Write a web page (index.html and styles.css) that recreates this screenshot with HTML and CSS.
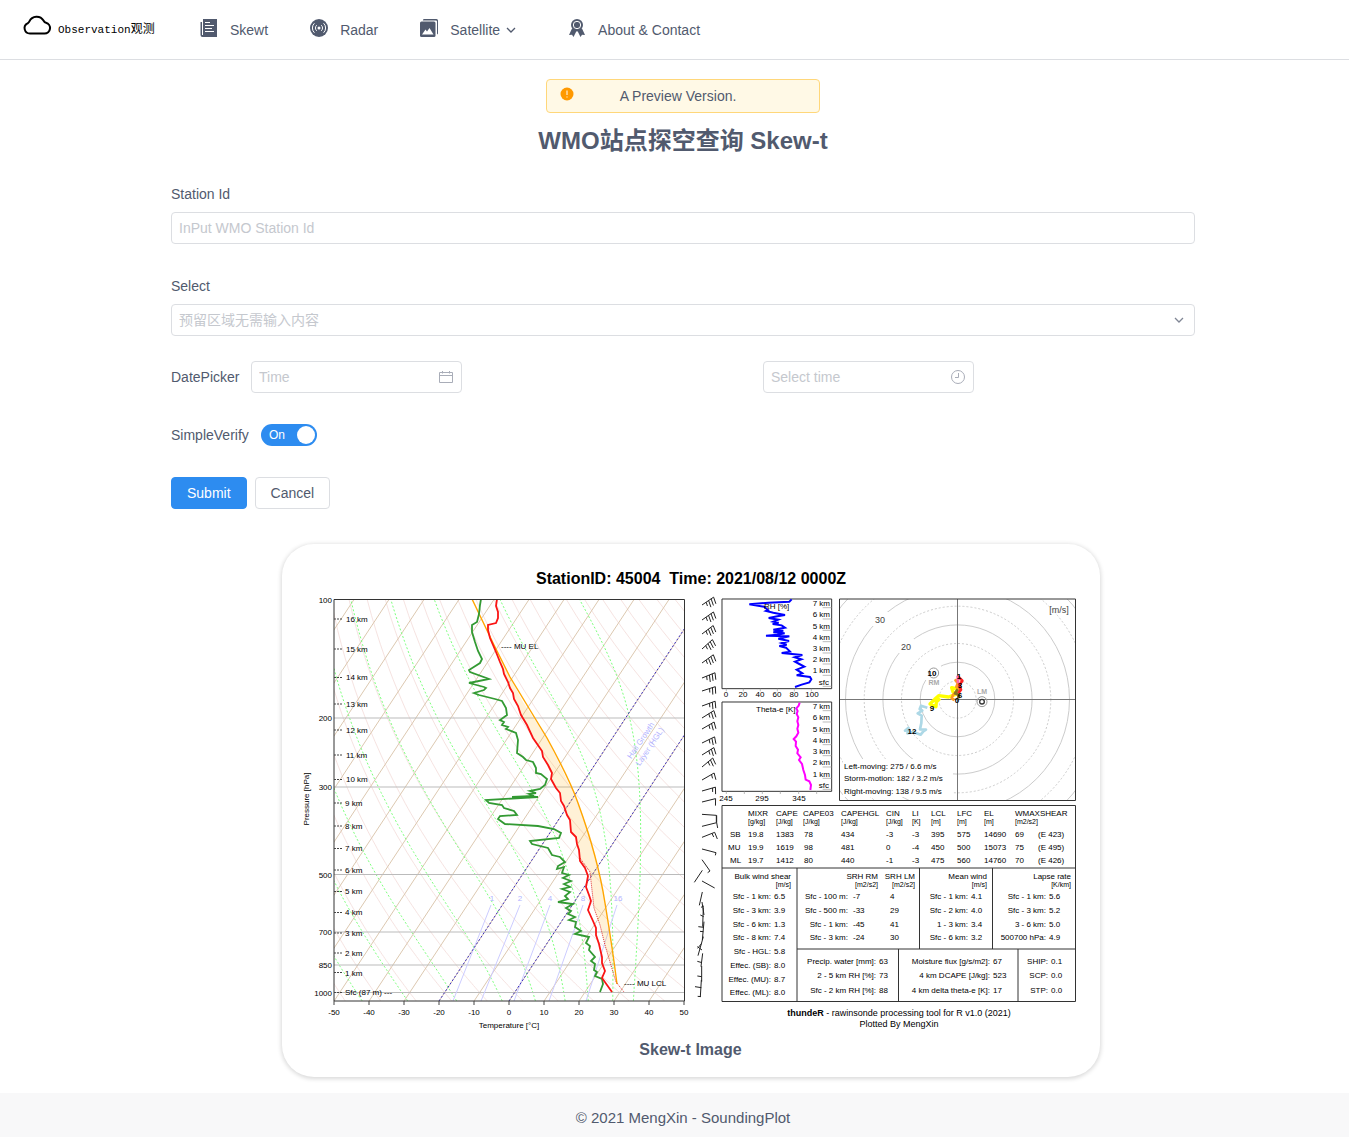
FILE: index.html
```html
<!DOCTYPE html>
<html lang="en">
<head>
<meta charset="utf-8">
<meta name="viewport" content="width=device-width, initial-scale=1">
<title>WMO站点探空查询 Skew-t</title>
<link rel="stylesheet" href="styles.css">
</head>
<body>
<header class="header">
  <a class="brand" href="#">
    <svg class="brand-icon" viewBox="0 0 30 22" aria-hidden="true"><path d="M8 19.500H22.500A5.500 5.500 0 0 0 24 8.700C22.500 8.500 22.300 8 21.500 6.500A8 8 0 0 0 7.400 7.300C7 8.600 6.500 8.700 5.500 9.300A5.400 5.400 0 0 0 8 19.500Z"/></svg>
    <span class="brand-name">Observation<span class="brand-cjk">观测</span></span>
  </a>
  <nav class="nav">
    <a class="nav-item" href="#"><svg class="nav-icon" viewBox="0 0 18 18" aria-hidden="true"><path class="solid" d="M3 0H17V18H2.500A2 2 0 0 1 .5 16V3H2V16H3Z"/><path class="cut" d="M5 3.500H10M5 6.500H14M5 9.500H12M5 12.500H14"/></svg>Skewt</a>
    <a class="nav-item" href="#"><svg class="nav-icon" viewBox="0 0 18 18" aria-hidden="true"><circle class="solid" cx="9" cy="9" r="9"/><circle class="dot" cx="9" cy="9" r="1.500"/><path class="cut" d="M6.700 6.200A3.800 3.800 0 0 0 6.700 11.800M11.300 6.200A3.800 3.800 0 0 1 11.300 11.800M4.400 4.300A6.500 6.500 0 0 0 4.400 13.700M13.600 4.300A6.500 6.500 0 0 1 13.600 13.700"/></svg>Radar</a>
    <a class="nav-item nav-sub" href="#"><svg class="nav-icon" viewBox="0 0 18 18" aria-hidden="true"><path class="solid" d="M4 0H16.500A1.500 1.500 0 0 1 18 1.500V14A1.500 1.500 0 0 1 17 15.500V2.500A1 1 0 0 0 16 1.500H2.800A1.500 1.500 0 0 1 4 0Z"/><rect class="solid" y="2.500" width="15.500" height="15.500" rx="1.500"/><path class="dot" d="M2 15.500L5.500 10.500L7 12.500L9.500 9L13.500 15.500Z"/></svg>Satellite<svg class="chevron" viewBox="0 0 10 10" aria-hidden="true"><path d="M1 3L5 7L9 3"/></svg></a>
    <a class="nav-item" href="#"><svg class="nav-icon" viewBox="0 0 18 18" aria-hidden="true"><path class="solid" d="M4 9.500L1 16L4 15.700L5.500 18L8 13H10L12.500 18L14 15.700L17 16L14 9.500Z"/><path class="cut" d="M9 12V18"/><circle class="solid" cx="9" cy="6" r="6"/><circle class="cut" cx="9" cy="6" r="3.700"/></svg>About &amp; Contact</a>
  </nav>
</header>

<main class="main">
  <div class="alert" role="alert"><svg class="alert-icon" viewBox="0 0 14 14" aria-hidden="true"><circle cx="7" cy="7" r="6.500"/><path d="M7 3.500V8M7 9.500V10.500"/></svg>A Preview Version.</div>
  <h1 class="title">WMO站点探空查询 Skew-t</h1>

  <form class="form">
    <div class="field">
      <label for="station">Station Id</label>
      <input class="control" id="station" type="text" placeholder="InPut WMO Station Id">
    </div>
    <div class="field field-last">
      <label for="region">Select</label>
      <div class="control-wrap">
        <select class="control" id="region"><option>预留区域无需输入内容</option></select>
        <svg class="chevron control-icon" viewBox="0 0 10 10" aria-hidden="true"><path d="M1 3L5 7L9 3"/></svg>
      </div>
    </div>
    <div class="dates">
      <div class="date-cell">
        <label class="date-label" for="date">DatePicker</label>
        <div class="control-wrap picker">
          <input class="control" id="date" type="text" placeholder="Time">
          <svg class="picker-icon control-icon" viewBox="0 0 14 14" aria-hidden="true"><path d="M.5 2.500H13.500V12.500H.5ZM.5 5.500H13.500M3.500 1V3.500M10.500 1V3.500"/></svg>
        </div>
      </div>
      <div class="date-cell">
        <span class="date-label"></span>
        <div class="control-wrap picker">
          <input class="control" type="text" placeholder="Select time" aria-label="Select time">
          <svg class="picker-icon control-icon" viewBox="0 0 14 14" aria-hidden="true"><circle cx="7" cy="7" r="6.500"/><path d="M7.500 3V7.500H4"/></svg>
        </div>
      </div>
    </div>
    <div class="verify">
      <label class="verify-label" for="verify">SimpleVerify</label>
      <label class="switch"><input id="verify" type="checkbox" role="switch" checked><span>On</span></label>
    </div>
    <div class="actions">
      <button class="btn btn-primary" type="submit">Submit</button>
      <button class="btn" type="reset">Cancel</button>
    </div>
  </form>

  <figure class="card">
    <svg class="plot" viewBox="282 544 818 494" role="img" aria-label="Skew-t sounding plot">
      <defs>
        <clipPath id="skew-clip"><rect x="334" y="599" width="350" height="402"/></clipPath>
        <clipPath id="hodo-clip"><rect x="840" y="599" width="236" height="201"/></clipPath>
      </defs>
      <text class="plot-title" x="691" y="584" text-anchor="middle">StationID: 45004&#160; Time: 2021/08/12 0000Z</text>

      <g clip-path="url(#skew-clip)">
        <g id="dry" class="dry"></g>
        <g id="isotherms" class="isotherm"></g>
        <g id="moist" class="moist"></g>
        <path class="isobar" d="M334 718H684M334 787H684M334 874.500H684M334 932H684M334 965H684M334 992.500H684"/>
        <path class="mixing" d="M453 1001L491 905M481 1001L520 905M514 1001L550 905M549 1001L583 905M586 1001L617 905"/>
        <path class="hgl" d="M439 1001L704 599M509 1001L774 599"/>
        <path class="cape" d="M494 647L503 672L513 695L523 718L542 752L551 772L552 780L560 795L570 820L572 832L577 842L580 860L590 872L592 890L594 908L600 925L605 945L610 962L613 966L610 933L605 903L598 867L590 835L578 803L567 780L547 738L523 702Z"/>
        <path class="parcel" d="M472 599L494 645L510 677L530 710L547 738Q570 780 578 803Q598 858 605 903Q612 945 617 984"/>
        <path class="virtual" d="M580 858L590 872L592 890L594 908L600 925L605 945L610 962L616 982L624 992"/>
        <path class="dewpoint" d="M481 599L480 605L479 614L477 622L472 625L472 632L475 642L478 651L482 659L480 663L469 670L470 672L489 679L469 683L484 687L486 688L484 690L474 693L479 695L495 699L502 701L506 708L507 715L500 720L504 722L502 725L508 727L506 729L516 733L518 740L517 753L523 757L526 760L533 762L536 768L536 773L541 774L547 779L545 785L540 789L530 791L536 793L529 794L534 796L512 797L538 797L486 800L489 803L502 805L504 808L514 811L517 815L500 816L498 819L505 824L538 826L554 829L561 833L559 838L530 841L532 844L548 848L552 855L560 857L565 862L558 866L557 869L564 867L562 873L569 875L563 878L571 881L564 884L570 887L562 889L570 892L565 896L568 899L558 902L573 904L566 908L571 911L568 914L575 917L569 920L576 922L575 927L581 931L575 934L589 937L586 943L590 946L589 950L595 957L591 961L595 964L594 970L597 972L595 976L602 979L603 984L600 992"/>
        <path class="temperature" d="M497 599L496 606L498 612L498 618L496 623L488 625L488 630L490 638L493 645L496 652L500 662L503 669L504 674L508 682L510 688L513 693L514 699L518 706L521 715L527 725L533 738L542 751L543 757L548 765L552 773L551 779L556 788L560 793L561 801L564 806L567 815L570 820L571 832L576 837L577 844L579 850L580 861L585 868L588 876L586 887L589 895L591 901L588 910L593 921L596 928L596 935L599 944L602 957L602 963L605 971L602 978L612 992"/>
      </g>
      <path class="frame" d="M334 599.500H684.500V1001H334Z"/>
      <path class="tick" d="M334 619H343M334 649H343M334 677.500H343M334 704H343M334 730H343M334 755H343M334 779.500H343M334 803H343M334 826H343M334 848.500H343M334 870H343M334 891.500H343M334 912.500H343M334 933H343M334 953H343M334 972.500H343M334 992.500H343"/>
      <path class="tick tick-solid" d="M334 1001V1005M369 1001V1005M404 1001V1005M439 1001V1005M474 1001V1005M509 1001V1005M544 1001V1005M579 1001V1005M614 1001V1005M649 1001V1005M684 1001V1005"/>
      <g class="small">
        <text x="346" y="622">16 km</text><text x="346" y="652">15 km</text><text x="346" y="680">14 km</text><text x="346" y="707">13 km</text><text x="346" y="733">12 km</text><text x="346" y="758">11 km</text><text x="346" y="782">10 km</text><text x="345" y="806">9 km</text><text x="345" y="829">8 km</text><text x="345" y="851">7 km</text><text x="345" y="873">6 km</text><text x="345" y="894">5 km</text><text x="345" y="915">4 km</text><text x="345" y="936">3 km</text><text x="345" y="956">2 km</text><text x="345" y="976">1 km</text><text x="345" y="995">Sfc (87 m) ---</text>
        <text x="501" y="649">---- MU EL</text><text x="624" y="986">---- MU LCL</text>
      </g>
      <g class="small" text-anchor="end">
        <text x="332" y="603">100</text><text x="332" y="721">200</text><text x="332" y="790">300</text><text x="332" y="878">500</text><text x="332" y="935">700</text><text x="332" y="968">850</text><text x="332" y="996">1000</text>
      </g>
      <g class="small" text-anchor="middle">
        <text x="334" y="1015">-50</text><text x="369" y="1015">-40</text><text x="404" y="1015">-30</text><text x="439" y="1015">-20</text><text x="474" y="1015">-10</text><text x="509" y="1015">0</text><text x="544" y="1015">10</text><text x="579" y="1015">20</text><text x="614" y="1015">30</text><text x="649" y="1015">40</text><text x="684" y="1015">50</text>
        <text x="509" y="1028">Temperature [°C]</text>
        <text transform="translate(309 799) rotate(-90)">Pressure [hPa]</text>
      </g>
      <g class="small lilac" text-anchor="middle">
        <text x="492" y="901">1</text><text x="520" y="901">2</text><text x="550" y="901">4</text><text x="583" y="901">8</text><text x="618" y="901">16</text>
        <text transform="translate(643 742) rotate(-56)">Hail Growth</text><text transform="translate(652 748) rotate(-56)">Layer (HGL)</text>
      </g>

      <g id="barbs" class="barb"></g>
      <!-- low-level barbs, plotted at a third of the drawing units -->
      <g class="barb barb-low" transform="translate(690 800) scale(.33333)">
        <path d="M36 43L79 46V67M36 79L80 68L83 84M80 68V46M36 112L74 97L82 117M66 100L71 111M36 147L78 158L76 166M36 179L60 213L53 218M37 211L13 247M36 243L74 264M37 276L28 316M36 306L42 345M42 318L33 322M40 322L38 380M41 350L31 345M42 365L37 420M41 382L25 380M40 395L30 394M40 410L24 467M35 430L23 445M36 450L22 440M38 460L33 500M36 488L22 484M35 498V545M35 530L22 528M34 540L31 590M34 563L15 560M33 590L23 589"/>
      </g>

      <g transform="translate(690 590) scale(.33333)">
        <path class="frame panel" d="M96 27H425V296H96ZM96 336H425V604H96Z"/>
        <path class="km-tick" d="M398 53H425M398 87H425M398 121H425M398 155H425M398 189H425M398 222H425M398 256H425M398 289H425M398 362H425M398 396H425M398 430H425M398 464H425M398 497H425M398 531H425M398 565H425M398 598H425"/>
        <path class="km-tick" d="M109 296V304M160 296V304M211 296V304M262 296V304M313 296V304M364 296V304M109 604V612M163 604V612M217 604V612M271 604V612M326 604V612M380 604V612"/>
        <path class="rh" d="M305 28L298 35L235 38L178 43L222 50L234 60L228 63L250 68L285 75L262 79L236 84L265 89L250 95L266 98L248 102L275 106L285 113L250 119L280 122L250 127L284 130L262 134L228 137L298 139L265 146L297 153L275 159L290 164L268 168L288 173L300 185L275 189L337 195L314 202L334 208L315 215L328 222L343 230L320 239L337 250L320 256L360 261L364 268L358 277L335 284L315 291"/>
        <path class="theta" d="M329 338L326 347L319 355L323 363L320 372L325 382L322 394L325 405L322 416L325 428L319 439L311 447L318 455L317 468L324 479L322 490L332 502L327 510L336 522L340 540L345 555L347 569L358 574L363 585L361 600"/>
      </g>
      <g class="small">
        <text x="764" y="609">RH [%]</text><text x="756" y="712">Theta-e [K]</text>
      </g>
      <g class="small" text-anchor="end">
        <text x="830" y="606">7 km</text><text x="830" y="617">6 km</text><text x="830" y="629">5 km</text><text x="830" y="640">4 km</text><text x="830" y="651">3 km</text><text x="830" y="662">2 km</text><text x="830" y="673">1 km</text><text x="829" y="685">sfc</text>
        <text x="830" y="709">7 km</text><text x="830" y="720">6 km</text><text x="830" y="732">5 km</text><text x="830" y="743">4 km</text><text x="830" y="754">3 km</text><text x="830" y="765">2 km</text><text x="830" y="777">1 km</text><text x="829" y="788">sfc</text>
      </g>
      <g class="small" text-anchor="middle">
        <text x="726" y="697">0</text><text x="743" y="697">20</text><text x="760" y="697">40</text><text x="777" y="697">60</text><text x="794" y="697">80</text><text x="812" y="697">100</text>
        <text x="726" y="801">245</text><text x="762" y="801">295</text><text x="799" y="801">345</text>
      </g>

      <g clip-path="url(#hodo-clip)">
        <g class="ring"><circle cx="957.500" cy="699.500" r="37.300"/><circle cx="957.500" cy="699.500" r="74.600"/><circle cx="957.500" cy="699.500" r="112"/><circle cx="957.500" cy="699.500" r="149"/></g>
        <g class="ring ring-dotted"><circle cx="957.500" cy="699.500" r="18.600"/><circle cx="957.500" cy="699.500" r="56"/><circle cx="957.500" cy="699.500" r="93.300"/><circle cx="957.500" cy="699.500" r="130.600"/></g>
        <path class="axis" d="M840 699.500H1076M957.500 599V800"/>
        <path class="mask" d="M872 612H888V626H872ZM897 639H914V653H897ZM924 666H941V680H924ZM843 759H953V797H843Z"/>
      </g>
      <g class="hodo" transform="translate(830 590) scale(.33333)">
        <path class="h-blue" d="M292 353L273 347L269 357L277 362L263 370L275 377L274 399L270 418L288 419L280 424L272 434L250 426L232 430L236 419L225 422L238 411"/>
        <path class="h-yellow" d="M383 297L365 293L369 306L377 313L356 321L326 317L314 328L300 342L318 350L319 336L330 325"/>
        <path class="h-orange" d="M375 268L383 280L379 291L388 297L369 315L365 325L373 330"/>
        <path class="h-red" d="M384 259L397 272L388 286L393 299L385 310"/>
        <path class="h-olive" d="M383 298L375 310L387 315L384 325"/>
        <path class="h-pink" d="M383 257L384 280"/>
        <circle class="mover" cx="311" cy="249" r="15"/><circle class="mover" cx="456" cy="335" r="15"/>
        <circle class="mover-in" cx="456" cy="335" r="7"/>
      </g>
      <path class="frame" d="M839.500 599H1075.500V800.500H839.500Z"/>
      <g class="medium" text-anchor="middle">
        <text x="880" y="623">30</text><text x="906" y="650">20</text><text x="1059" y="613">[m/s]</text>
      </g>
      <g class="small bold" text-anchor="middle">
        <text x="932" y="676">10</text><text x="959" y="679">1</text><text x="960" y="688">3</text><text x="960" y="698">6</text><text x="957" y="703">0</text><text x="932" y="711">9</text><text x="912" y="734">12</text>
      </g>
      <g class="tiny bold gray" text-anchor="middle"><text x="934" y="685">RM</text><text x="982" y="694">LM</text></g>
      <g class="small">
        <text x="844" y="769">Left-moving: 275 / 6.6 m/s</text><text x="844" y="781">Storm-motion: 182 / 3.2 m/s</text><text x="844" y="794">Right-moving: 138 / 9.5 m/s</text>
      </g>

      <path class="frame" d="M722 805.500H1075.500V1001.500H722ZM722 868H1075.500M797 868V1001.500M919.500 868V949M992.500 868V949M797 949H1075.500M898.500 949V1001.500M1018 949V1001.500"/>
      <g class="small">
        <text x="748" y="816">MIXR</text><text x="776" y="816">CAPE</text><text x="803" y="816">CAPE03</text><text x="841" y="816">CAPEHGL</text><text x="886" y="816">CIN</text><text x="912" y="816">LI</text><text x="931" y="816">LCL</text><text x="957" y="816">LFC</text><text x="984" y="816">EL</text><text x="1015" y="816">WMAXSHEAR</text>
        <text x="730" y="837">SB</text><text x="748" y="837">19.8</text><text x="776" y="837">1383</text><text x="804" y="837">78</text><text x="841" y="837">434</text><text x="886" y="837">-3</text><text x="912" y="837">-3</text><text x="931" y="837">395</text><text x="957" y="837">575</text><text x="984" y="837">14690</text><text x="1015" y="837">69</text><text x="1038" y="837">(E 423)</text>
        <text x="728" y="850">MU</text><text x="748" y="850">19.9</text><text x="776" y="850">1619</text><text x="804" y="850">98</text><text x="841" y="850">481</text><text x="886" y="850">0</text><text x="912" y="850">-4</text><text x="931" y="850">450</text><text x="957" y="850">500</text><text x="984" y="850">15073</text><text x="1015" y="850">75</text><text x="1038" y="850">(E 495)</text>
        <text x="730" y="863">ML</text><text x="748" y="863">19.7</text><text x="776" y="863">1412</text><text x="804" y="863">80</text><text x="841" y="863">440</text><text x="886" y="863">-1</text><text x="912" y="863">-3</text><text x="931" y="863">475</text><text x="957" y="863">560</text><text x="984" y="863">14760</text><text x="1015" y="863">70</text><text x="1038" y="863">(E 426)</text>
        <text x="774" y="899">6.5</text><text x="774" y="913">3.9</text><text x="774" y="927">1.3</text><text x="774" y="940">7.4</text><text x="774" y="954">5.8</text><text x="774" y="968">8.0</text><text x="774" y="982">8.7</text><text x="774" y="995">8.0</text>
        <text x="853" y="899">-7</text><text x="853" y="913">-33</text><text x="853" y="927">-45</text><text x="853" y="940">-24</text>
        <text x="890" y="899">4</text><text x="890" y="913">29</text><text x="890" y="927">41</text><text x="890" y="940">30</text>
        <text x="971" y="899">4.1</text><text x="971" y="913">4.0</text><text x="971" y="927">3.4</text><text x="971" y="940">3.2</text>
        <text x="1049" y="899">5.6</text><text x="1049" y="913">5.2</text><text x="1049" y="927">5.0</text><text x="1049" y="940">4.9</text>
        <text x="879" y="964">63</text><text x="879" y="978">73</text><text x="879" y="993">88</text>
        <text x="993" y="964">67</text><text x="993" y="978">523</text><text x="993" y="993">17</text>
        <text x="1051" y="964">0.1</text><text x="1051" y="978">0.0</text><text x="1051" y="993">0.0</text>
      </g>
      <g class="tiny">
        <text x="748" y="824">[g/kg]</text><text x="776" y="824">[J/kg]</text><text x="803" y="824">[J/kg]</text><text x="841" y="824">[J/kg]</text><text x="886" y="824">[J/kg]</text><text x="912" y="824">[K]</text><text x="931" y="824">[m]</text><text x="957" y="824">[m]</text><text x="984" y="824">[m]</text><text x="1015" y="824">[m2/s2]</text>
      </g>
      <g class="tiny" text-anchor="end"><text x="791" y="887">[m/s]</text><text x="878" y="887">[m2/s2]</text><text x="915" y="887">[m2/s2]</text><text x="987" y="887">[m/s]</text><text x="1071" y="887">[K/km]</text></g>
      <g class="small" text-anchor="end">
        <text x="791" y="879">Bulk wind shear</text><text x="878" y="879">SRH RM</text><text x="915" y="879">SRH LM</text><text x="987" y="879">Mean wind</text><text x="1071" y="879">Lapse rate</text>
        <text x="771" y="899">Sfc - 1 km:</text><text x="771" y="913">Sfc - 3 km:</text><text x="771" y="927">Sfc - 6 km:</text><text x="771" y="940">Sfc - 8 km:</text><text x="771" y="954">Sfc - HGL:</text><text x="771" y="968">Effec. (SB):</text><text x="771" y="982">Effec. (MU):</text><text x="771" y="995">Effec. (ML):</text>
        <text x="848" y="899">Sfc - 100 m:</text><text x="848" y="913">Sfc - 500 m:</text><text x="848" y="927">Sfc - 1 km:</text><text x="848" y="940">Sfc - 3 km:</text>
        <text x="968" y="899">Sfc - 1 km:</text><text x="968" y="913">Sfc - 2 km:</text><text x="968" y="927">1 - 3 km:</text><text x="968" y="940">Sfc - 6 km:</text>
        <text x="1046" y="899">Sfc - 1 km:</text><text x="1046" y="913">Sfc - 3 km:</text><text x="1046" y="927">3 - 6 km:</text><text x="1046" y="940">500700 hPa:</text>
        <text x="876" y="964">Precip. water [mm]:</text><text x="876" y="978">2 - 5 km RH [%]:</text><text x="876" y="993">Sfc - 2 km RH [%]:</text>
        <text x="990" y="964">Moisture flux [g/s/m2]:</text><text x="990" y="978">4 km DCAPE [J/kg]:</text><text x="990" y="993">4 km delta theta-e [K]:</text>
        <text x="1048" y="964">SHIP:</text><text x="1048" y="978">SCP:</text><text x="1048" y="993">STP:</text>
      </g>
      <g class="credit" text-anchor="middle"><text x="899" y="1016"><tspan class="bold">thundeR</tspan> - rawinsonde processing tool for R v1.0 (2021)</text><text x="899" y="1027">Plotted By MengXin</text></g>
    </svg>
    <figcaption class="caption">Skew-t Image</figcaption>
  </figure>
</main>

<footer class="footer">© 2021 MengXin - SoundingPlot</footer>
<script src="plot.js"></script>
</body>
</html>
```

FILE: styles.css
```css
* { box-sizing: border-box; }

body {
  margin: 0;
  min-height: 100vh;
  background: #fff;
  color: #515a6e;
  font: 14px/20px "Liberation Sans", Arial, "Noto Sans CJK SC", sans-serif;
}

/* Header */
.header {
  display: flex;
  align-items: center;
  height: 60px;
  padding-left: 22px;
  border-bottom: 1px solid #dcdee2;
}
.brand {
  display: flex;
  align-items: center;
  gap: 6px;
  width: 158px;
  color: #000;
  text-decoration: none;
}
.brand-icon { width: 30px; height: 22px; margin-bottom: 10px; fill: none; stroke: #000; stroke-width: 2; }
.brand-name { font: 11px/20px "Liberation Mono", "Noto Sans CJK SC", monospace; white-space: nowrap; }
.brand-cjk { font-size: 12px; }
.nav { display: flex; gap: 2px; }
.nav-item {
  display: flex;
  align-items: center;
  gap: 12px;
  padding: 0 20px;
  color: #515a6e;
  text-decoration: none;
  white-space: nowrap;
}
.nav-sub { padding-right: 30px; }
.nav-icon { width: 18px; height: 18px; margin-bottom: 4px; }
.nav-icon .solid { fill: #515a6e; }
.nav-icon .dot { fill: #fff; }
.nav-icon .cut { fill: none; stroke: #fff; stroke-width: 1; }
.chevron { width: 10px; height: 10px; fill: none; stroke: #515a6e; stroke-width: 1.3; }
.nav-item .chevron { margin-left: -6px; }

/* Page body */
.main {
  display: flex;
  flex-direction: column;
  align-items: center;
  padding: 19px 0 16px 17px;
}
.alert {
  position: relative;
  width: 274px;
  padding: 6px 48px 6px 38px;
  border: 1px solid #ffd77a;
  border-radius: 4px;
  background: #fff9e6;
  text-align: center;
}
.alert-icon { position: absolute; top: 7px; left: 13px; width: 14px; height: 14px; fill: #f90; stroke: none; }
.alert-icon path { stroke: #fff; }
.title { margin: 10px 0 25px; font-size: 24px; line-height: 36px; }

/* Form */
.form { width: 100%; max-width: 1024px; }
.field { display: flex; flex-direction: column; gap: 8px; margin-bottom: 32px; }
.field-last { margin-bottom: 25px; }
.control-wrap { position: relative; }
.control {
  display: block;
  width: 100%;
  height: 32px;
  padding: 4px 7px;
  border: 1px solid #dcdee2;
  border-radius: 4px;
  background: #fff;
  color: #515a6e;
  font: inherit;
  appearance: none;
}
select.control { color: #c5c8ce; }
.control::placeholder { color: #c5c8ce; opacity: 1; }
.control-icon { position: absolute; top: 0; bottom: 0; right: 9px; margin: auto 0; pointer-events: none; }
.control-icon.chevron { right: 11px; stroke: #808695; }
.picker { width: 211px; }
.picker-icon { width: 14px; height: 14px; fill: none; stroke: #a9adb8; stroke-width: 1; }
.dates { display: grid; grid-template-columns: 1fr 1fr; margin-bottom: 31px; }
.date-cell { display: flex; align-items: center; }
.date-label { width: 80px; }
.verify { display: flex; align-items: center; margin-bottom: 31px; }
.verify-label { width: 90px; }
.switch {
  display: flex;
  align-items: center;
  position: relative;
  width: 56px;
  height: 22px;
  padding-left: 8px;
  border-radius: 11px;
  background: #2d8cf0;
  color: #fff;
  font-size: 12px;
}
.switch input { position: absolute; inset: 0; width: 100%; height: 100%; margin: 0; opacity: 0; }
.switch::after {
  content: "";
  position: absolute;
  top: 2px;
  right: 2px;
  width: 18px;
  height: 18px;
  border-radius: 50%;
  background: #fff;
}
.actions { display: flex; gap: 8px; margin-bottom: 35px; }
.btn {
  height: 32px;
  padding: 0 15px;
  border: 1px solid #dcdee2;
  border-radius: 4px;
  background: #fff;
  color: #515a6e;
  font: inherit;
}
.btn-primary { border-color: #2d8cf0; background: #2d8cf0; color: #fff; }

/* Sounding card */
.card {
  width: 80%;
  max-width: 818px;
  margin: 0 0 0 15px;
  padding-bottom: 14px;
  border-radius: 32px;
  background: #fff;
  box-shadow: 0 1px 4px 1px rgba(0, 0, 0, .15);
}
.plot { display: block; width: 100%; height: auto; font-family: "Liberation Sans", Arial, sans-serif; }
.plot path, .plot circle { fill: none; }
.caption { margin-top: -1px; font-size: 16px; line-height: 26px; font-weight: bold; text-align: center; }

.plot-title { font-size: 16px; font-weight: bold; fill: #000; }
.small { font-size: 8px; }
.medium { font-size: 9px; fill: #444; }
.tiny { font-size: 7px; }
.credit { font-size: 9px; }
.bold { font-weight: bold; }
.gray { fill: #aaa; }
.lilac { fill: #b3b3ff; }
.dry { stroke: #f6e3e1; }
.isotherm { stroke: #dcc8b0; }
.moist { stroke: #7dff7d; stroke-dasharray: 2 2; }
.isobar { stroke: #bbb; }
.mixing { stroke: #ccccff; }
.hgl { stroke: #3a2fc4; stroke-dasharray: 2 2; }
.plot .cape { fill: rgba(255, 165, 0, .16); }
.parcel { stroke: orange; stroke-width: 1.4; }
.virtual { stroke: #e03030; stroke-dasharray: 1 1; }
.dewpoint { stroke: #339a33; stroke-width: 1.8; }
.temperature { stroke: #fa1414; stroke-width: 1.8; }
.frame { stroke: #333; }
.panel { stroke-width: 3; }
.tick { stroke: #444; stroke-dasharray: 2 1; }
.tick-solid { stroke-dasharray: none; }
.km-tick { stroke: #999; stroke-width: 2; }
.barb { stroke: #222; stroke-width: 1; }
.barb-low { stroke-width: 3; }
.rh { stroke: #00f; stroke-width: 6; }
.theta { stroke: #f0f; stroke-width: 6; }
.ring { stroke: #ccc; }
.ring-dotted { stroke-dasharray: 2 2; }
.axis { stroke: #777; }
.plot .mask { fill: #fff; }
.hodo { stroke-width: 8; stroke-linejoin: round; }
.h-blue { stroke: #add8e6; }
.h-yellow { stroke: #ff0; stroke-width: 10; }
.h-orange { stroke: #ff9a20; }
.h-red { stroke: #f22; }
.h-olive { stroke: #8b7520; }
.h-pink { stroke: #f6a; }
.mover { stroke: #999; stroke-width: 3; }
.mover-in { stroke: #333; stroke-width: 4; }

/* Footer */
.footer {
  padding: 15px 0 9px 17px;
  background: #f8f8f9;
  font-size: 15px;
  line-height: 20px;
  text-align: center;
}
```

FILE: plot.js
```js
// Background curves and wind barbs of the skew-t diagram.
const BOTTOM = 1001, LEFT = 334, DEG = 3.5, SKEW = 0.66;
const yOf = p => 992.5 + 393 * Math.log10(p / 1000);
const xOf = (t, p) => LEFT + (t + 50) * DEG + SKEW * (BOTTOM - yOf(p));

function addPath(id, d) {
  const path = document.createElementNS('http://www.w3.org/2000/svg', 'path');
  path.setAttribute('d', d);
  document.getElementById(id).append(path);
}
const toPath = pts => 'M' + pts.map(([x, y]) => x.toFixed(1) + ' ' + y.toFixed(1)).join('L');

for (let t = -120; t < 50; t += 10) {
  addPath('isotherms', toPath([[xOf(t, 1050), BOTTOM], [xOf(t, 100), yOf(100)]]));
}

for (let theta = 223.15; theta <= 520; theta += 10) {
  const pts = [];
  for (let p = 1050; p >= 100; p -= 10) {
    pts.push([xOf(theta * Math.pow(p / 1000, 0.286) - 273.15, p), yOf(p)]);
  }
  addPath('dry', toPath(pts));
}

// Saturated adiabats, integrated upwards from their 1050 hPa temperature.
for (const start of [-42, -29, -15, -2, 7.5, 16, 22.6, 29.6, 35.5]) {
  const pts = [];
  let t = start;
  for (let p = 1050; p >= 100; p -= 2) {
    if (p % 10 === 0) pts.push([xOf(t, p), yOf(p)]);
    const k = t + 273.15;
    const es = 6.112 * Math.exp(17.67 * t / (t + 243.5));
    const rs = 0.622 * es / (p - es);
    const slope = (287 * k + 2.5e6 * rs) / (1005 + 2.5e6 * 2.5e6 * rs * 0.622 / (287 * k * k)) / p;
    t -= slope * 2;
  }
  addPath('moist', toPath(pts));
}

// Each barb: base y, rise angle in degrees, number of feathers.
const barbs = [
  [605, 34, 4], [620, 35, 4], [634, 37, 4], [649, 42, 4], [663, 36, 4], [678, 22, 4],
  [691, 18, 3], [706, 20, 3], [718, 32, 3], [729, 30, 3], [743, 26, 3], [755, 32, 3],
  [767, 40, 3], [780, 30, 2], [791, 16, 2], [802, 14, 1]
];
const RAD = Math.PI / 180;
for (const [y, angle, count] of barbs) {
  const ux = Math.cos(angle * RAD), uy = -Math.sin(angle * RAD);
  const fx = Math.cos((angle - 105) * RAD), fy = -Math.sin((angle - 105) * RAD);
  let d = `M702 ${y}L${702 + 14 * ux} ${y + 14 * uy}`;
  for (let i = 0; i < count; i++) {
    const r = 14 - i * 3, len = i === count - 1 && count > 1 ? 4 : 7;
    const x = 702 + r * ux, top = y + r * uy;
    d += `M${x} ${top}L${x + len * fx} ${top + len * fy}`;
  }
  addPath('barbs', d);
}
```
